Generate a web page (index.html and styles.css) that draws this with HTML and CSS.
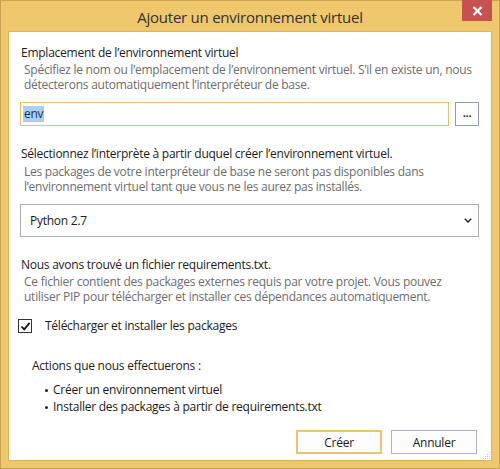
FILE: index.html
```html
<!DOCTYPE html>
<html lang="fr">
<head>
<meta charset="utf-8">
<title>Ajouter un environnement virtuel</title>
<link rel="stylesheet" href="styles.css">
</head>
<body>
<div class="window">
  <div class="titlebar">
    <span class="title">Ajouter un environnement virtuel</span>
    <div class="close" aria-label="Fermer">
      <svg width="11" height="10" viewBox="0 0 11 10"><path d="M1.5 1 L9.5 9 M9.5 1 L1.5 9" stroke="#fff" stroke-width="2.4" fill="none"/></svg>
    </div>
  </div>
  <div class="client">
    <div class="heading h1">Emplacement de l’environnement virtuel</div>
    <div class="desc d1">Spécifiez le nom ou l’emplacement de l’environnement virtuel. S’il en existe un, nous détecterons automatiquement l’interpréteur de base.</div>
    <div class="path-row">
      <div class="input"><span class="sel">env</span></div>
      <div class="dots">...</div>
    </div>

    <div class="heading h2">Sélectionnez l’interprète à partir duquel créer l’environnement virtuel.</div>
    <div class="desc d2">Les packages de votre interpréteur de base ne seront pas disponibles dans l’environnement virtuel tant que vous ne les aurez pas installés.</div>
    <div class="select">
      <span>Python 2.7</span>
      <svg width="8" height="5" viewBox="0 0 8 5"><path d="M0.8 0.8 L4 4 L7.2 0.8" stroke="#222" stroke-width="1.4" fill="none"/></svg>
    </div>

    <div class="heading h3">Nous avons trouvé un fichier requirements.txt.</div>
    <div class="desc d3">Ce fichier contient des packages externes requis par votre projet. Vous pouvez utiliser PIP pour télécharger et installer ces dépendances automatiquement.</div>
    <label class="check-row">
      <span class="checkbox"><svg width="11" height="11" viewBox="0 0 11 11"><path d="M1.5 5.5 L4.2 8.3 L9.6 1.8" stroke="#111" stroke-width="1.8" fill="none"/></svg></span>
      <span class="check-label">Télécharger et installer les packages</span>
    </label>

    <div class="actions">
      <div class="actions-title">Actions que nous effectuerons :</div>
      <ul class="action-list">
        <li>Créer un environnement virtuel</li>
        <li>Installer des packages à partir de requirements.txt</li>
      </ul>
    </div>

    <div class="buttons">
      <div class="btn btn-default">Créer</div>
      <div class="btn">Annuler</div>
    </div>
    <svg class="grip" width="9" height="9" viewBox="0 0 9 9">
      <g fill="#c9c9c9">
        <rect x="7" y="1" width="1" height="1"/>
        <rect x="5" y="3" width="1" height="1"/><rect x="7" y="3" width="1" height="1"/>
        <rect x="3" y="5" width="1" height="1"/><rect x="5" y="5" width="1" height="1"/><rect x="7" y="5" width="1" height="1"/>
        <rect x="1" y="7" width="1" height="1"/><rect x="3" y="7" width="1" height="1"/><rect x="5" y="7" width="1" height="1"/><rect x="7" y="7" width="1" height="1"/>
      </g>
    </svg>
  </div>
</div>
</body>
</html>
```

FILE: styles.css
```css
* { box-sizing: border-box; }
html, body { margin: 0; padding: 0; }
body {
  width: 500px;
  height: 469px;
  font-family: "Open Sans", "Noto Sans", "Liberation Sans", sans-serif;
  font-size: 12px;
  letter-spacing: -0.25px;
  color: #1b1b1b;
  overflow: hidden;
}
.window {
  position: relative;
  width: 500px;
  height: 469px;
  border: 1px solid #c9a452;
  background: #efc76c;
  padding: 0 7px 7px 7px;
  display: flex;
  flex-direction: column;
}
.titlebar {
  height: 30px;
  display: flex;
  align-items: center;
  justify-content: center;
  flex: none;
}
.title {
  font-size: 15px;
  color: #333;
  letter-spacing: -0.25px;
  margin-top: 1px;
}
.close {
  position: absolute;
  top: -1px;
  right: 7px;
  width: 30px;
  height: 21px;
  background: #c75050;
  display: flex;
  align-items: center;
  justify-content: center;
}
.client {
  position: relative;
  flex: 1;
  background: #fff;
  border: 1px solid #d8b562;
  padding: 13px 11px 6px 11px;
  display: flex;
  flex-direction: column;
}
.heading {
  line-height: 16px;
  padding-left: 1px;
  color: #1b1b1b;
}
.desc {
  color: #6d6d6d;
  line-height: 15px;
  padding-left: 4px;
}
.d1 { margin-top: 1px; }
.h2 { margin-top: 20px; }
.d2 { margin-top: 2px; }
.h3 { margin-top: 20px; }
.d3 { margin-top: 1px; }

.path-row {
  margin-top: 10px;
  display: flex;
  gap: 6px;
}
.input {
  flex: 1;
  height: 24px;
  border: 1px solid #e6c46c;
  display: flex;
  align-items: center;
  padding-left: 2px;
}
.sel {
  background: #a9d0f2;
  color: #1b2f55;
  padding: 0 1px;
  line-height: 16px;
}
.dots {
  width: 24px;
  height: 24px;
  border: 1px solid #8e9cb0;
  display: flex;
  align-items: center;
  justify-content: center;
  font-weight: bold;
  font-size: 11px;
  padding-bottom: 3px;
  margin-right: 1px;
}
.select {
  margin-top: 10px;
  height: 33px;
  border: 1px solid #abadb3;
  display: flex;
  align-items: center;
  justify-content: space-between;
  padding: 0 6px 0 9px;
  margin-right: 1px;
}
.check-row {
  margin-top: 14px;
  margin-left: -2px;
  display: flex;
  align-items: center;
  height: 16px;
}
.checkbox {
  width: 14px;
  height: 14px;
  border: 1px solid #333;
  display: flex;
  align-items: center;
  justify-content: center;
  background: #fff;
}
.check-label {
  margin-left: 13px;
  line-height: 16px;
}
.actions {
  margin-top: 24px;
  padding-left: 12px;
}
.actions-title { line-height: 16px; }
.action-list {
  list-style: none;
  margin: 7px 0 0 0;
  padding: 0 0 0 13px;
}
.action-list li {
  line-height: 17px;
  position: relative;
  padding-left: 8px;
}
.action-list li::before {
  content: "";
  position: absolute;
  left: 0;
  top: 8px;
  width: 3px;
  height: 3px;
  border-radius: 50%;
  background: #222;
}
.buttons {
  margin-top: auto;
  display: flex;
  justify-content: flex-end;
  gap: 9px;
  padding-right: 3px;
}
.btn {
  width: 86px;
  height: 24px;
  border: 1px solid #adb2bb;
  background: #fdfdfd;
  display: flex;
  align-items: center;
  justify-content: center;
}
.btn-default {
  border: 2px solid #e8c56e;
}
.grip {
  position: absolute;
  right: 0;
  bottom: 0;
}
```
